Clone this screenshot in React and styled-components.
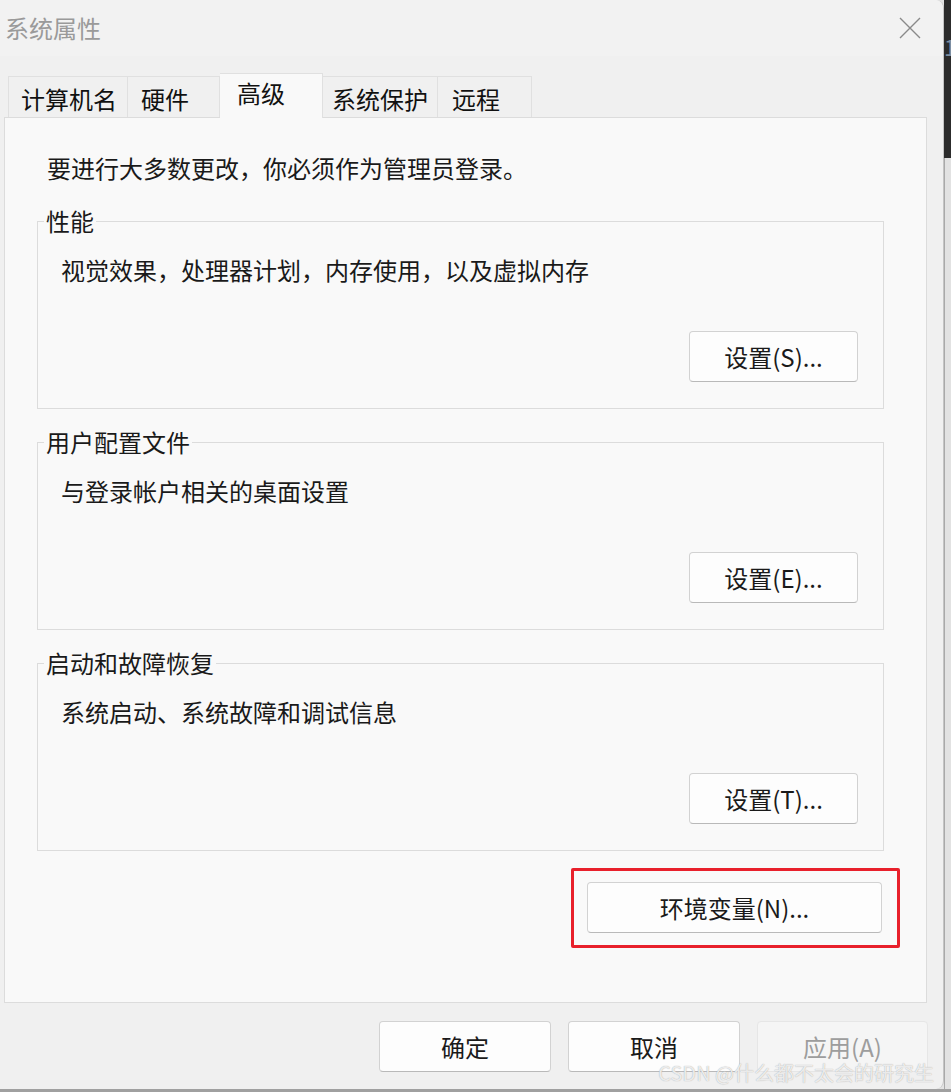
import React from "react";
import styled, { createGlobalStyle } from "styled-components";

const GlobalStyle = createGlobalStyle`
  html, body {
    margin: 0;
    padding: 0;
    background: #e3e3e3;
    overflow: hidden;
  }
  body {
    font-family: "Noto Sans CJK SC", "Microsoft YaHei", sans-serif;
    color: #1a1a1a;
  }
`;

const tabs = [
  { label: "计算机名", width: 120, pad: 12 },
  { label: "硬件", width: 92, pad: 13 },
  { label: "高级", width: 103, pad: 17, active: true },
  { label: "系统保护", width: 115, pad: 9 },
  { label: "远程", width: 94, pad: 14 },
];

const groups = [
  { title: "性能", desc: "视觉效果，处理器计划，内存使用，以及虚拟内存", btn: "设置(S)..." },
  { title: "用户配置文件", desc: "与登录帐户相关的桌面设置", btn: "设置(E)..." },
  { title: "启动和故障恢复", desc: "系统启动、系统故障和调试信息", btn: "设置(T)..." },
];

export default function App() {
  return (
    <>
      <GlobalStyle />
      <Screen>
        <Row>
          <Window>
            <TitleBar>
              <Title>系统属性</Title>
              <CloseIcon viewBox="0 0 22 22">
                <path d="M1 1 L21 21 M21 1 L1 21" />
              </CloseIcon>
            </TitleBar>
            <TabRow>
              {tabs.map((t) => (
                <Tab key={t.label} $active={t.active} $width={t.width} $pad={t.pad}>
                  {t.label}
                </Tab>
              ))}
            </TabRow>
            <Panel>
              <Notice>要进行大多数更改，你必须作为管理员登录。</Notice>
              <Groups>
                {groups.map((g) => (
                  <Group key={g.title}>
                    <Legend>{g.title}</Legend>
                    <GroupBody>
                      <Desc>{g.desc}</Desc>
                      <ButtonRow>
                        <Button $width={169}>{g.btn}</Button>
                      </ButtonRow>
                    </GroupBody>
                  </Group>
                ))}
              </Groups>
              <Highlight>
                <Button $width={295}>环境变量(N)...</Button>
              </Highlight>
            </Panel>
            <Footer>
              <Button $width={172}>确定</Button>
              <Button $width={172}>取消</Button>
              <Button $width={171} $disabled>
                应用(A)
              </Button>
            </Footer>
            <Watermark>CSDN @什么都不太会的研究生</Watermark>
          </Window>
          <SideStrip>
            <DarkBlock>
              <Glyph>1</Glyph>
            </DarkBlock>
            <LightBlock />
          </SideStrip>
        </Row>
        <BottomShadow />
      </Screen>
    </>
  );
}

const Screen = styled.div`
  width: 951px;
  height: 1092px;
  display: flex;
  flex-direction: column;
`;

const Row = styled.div`
  display: flex;
  height: 1089px;
`;

const Window = styled.div`
  position: relative;
  width: 944px;
  height: 1089px;
  flex-shrink: 0;
  background: #f0f0f0;
  border-top-right-radius: 8px;
  border-bottom-right-radius: 8px;
  display: flex;
  flex-direction: column;
  box-sizing: border-box;
  border-right: 1px solid #c4c4c4;
`;

const TitleBar = styled.div`
  height: 56px;
  display: flex;
  align-items: center;
  justify-content: space-between;
  padding: 0 22px 0 5px;
  background: #f2f2f2;
  border-top-right-radius: 8px;
`;

const Title = styled.div`
  font-size: 24px;
  line-height: 28px;
  color: #9a9a9a;
`;

const CloseIcon = styled.svg`
  width: 22px;
  height: 22px;
  fill: none;
  stroke: #8a8a8a;
  stroke-width: 1.4;
`;

const TabRow = styled.div`
  height: 61px;
  display: flex;
  align-items: flex-end;
  padding-left: 8px;
  position: relative;
  z-index: 1;
`;

const Tab = styled.div`
  box-sizing: border-box;
  width: ${({ $width }) => $width}px;
  height: ${({ $active }) => ($active ? 45 : 41)}px;
  padding-left: ${({ $pad }) => $pad}px;
  padding-top: ${({ $active }) => ($active ? 4 : 7)}px;
  margin-bottom: ${({ $active }) => ($active ? -1 : 0)}px;
  font-size: 24px;
  line-height: 30px;
  white-space: nowrap;
  color: #111;
  background: ${({ $active }) => ($active ? "#f9f9f9" : "#f0f0f0")};
  border: 1px solid #e0e0e0;
  border-bottom: none;
  & + & {
    border-left: none;
  }
`;

const Panel = styled.div`
  box-sizing: border-box;
  margin-left: 4px;
  width: 923px;
  height: 886px;
  border: 1px solid #dcdcdc;
  background: #f9f9f9;
  padding: 34px 42px 0 32px;
  display: flex;
  flex-direction: column;
`;

const Notice = styled.div`
  margin-left: 10px;
  font-size: 24px;
  line-height: 32px;
  margin-bottom: 24px;
`;

const Groups = styled.div`
  display: flex;
  flex-direction: column;
  gap: 20px;
`;

const Group = styled.fieldset`
  margin: 0;
  padding: 0;
  min-width: 0;
  border: 1px solid #dcdcdc;
`;

const Legend = styled.legend`
  margin-left: 6px;
  padding: 0 2px;
  font-size: 24px;
  line-height: 26px;
`;

const GroupBody = styled.div`
  padding: 20px 25px 26px 23px;
  display: flex;
  flex-direction: column;
`;

const Desc = styled.div`
  font-size: 24px;
  line-height: 32px;
`;

const ButtonRow = styled.div`
  margin-top: 45px;
  display: flex;
  justify-content: flex-end;
`;

const Button = styled.div`
  box-sizing: border-box;
  width: ${({ $width }) => $width}px;
  height: 51px;
  flex-shrink: 0;
  display: flex;
  align-items: center;
  justify-content: center;
  font-size: 24px;
  border-radius: 4px;
  background: ${({ $disabled }) => ($disabled ? "#f5f5f5" : "#fdfdfd")};
  border: 1px solid ${({ $disabled }) => ($disabled ? "#e6e6e6" : "#d2d2d2")};
  border-bottom-color: ${({ $disabled }) => ($disabled ? "#e6e6e6" : "#b9b9b9")};
  color: ${({ $disabled }) => ($disabled ? "#9d9d9d" : "#1a1a1a")};
`;

const Highlight = styled.div`
  align-self: flex-end;
  margin-top: 17px;
  margin-right: -16px;
  padding: 11px 15px 12px 13px;
  border: 3px solid #e8202b;
  border-radius: 2px;
`;

const Footer = styled.div`
  display: flex;
  justify-content: flex-end;
  gap: 17px;
  padding: 18px 15px 0 0;
`;

const Watermark = styled.div`
  position: absolute;
  right: 9px;
  bottom: 4px;
  font-size: 20px;
  line-height: 24px;
  color: rgba(255, 255, 255, 0.8);
  text-shadow: 0 0 1px #9a9a9a;
  white-space: nowrap;
`;

const SideStrip = styled.div`
  flex: 1;
  display: flex;
  flex-direction: column;
`;

const DarkBlock = styled.div`
  height: 158px;
  background: #2c2c2c;
  overflow: hidden;
`;

const Glyph = styled.div`
  margin-top: 34px;
  font-size: 22px;
  line-height: 24px;
  color: #7d8fa3;
`;

const LightBlock = styled.div`
  flex: 1;
  background: #e2e2e2;
  border-left: 1px solid #a9a9a9;
`;

const BottomShadow = styled.div`
  height: 3px;
  background: #a0a0a0;
`;
